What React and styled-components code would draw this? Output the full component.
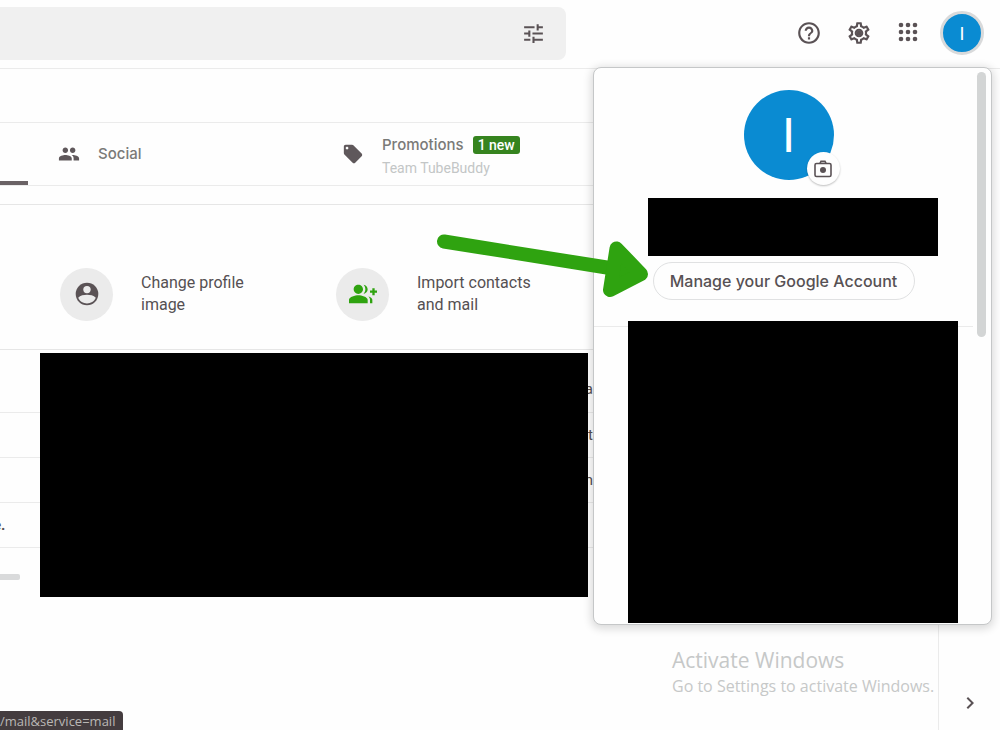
import React from "react";
import styled, { createGlobalStyle } from "styled-components";
import {
  MdTune,
  MdHelpOutline,
  MdOutlineSettings,
  MdPeople,
  MdLocalOffer,
  MdGroupAdd,
  MdChevronRight,
} from "react-icons/md";

const GlobalStyle = createGlobalStyle`
  * { box-sizing: border-box; }
  body {
    margin: 0;
    background: #fefefe;
    color: #555052;
    font-family: Roboto, sans-serif;
  }
  button, input { font: inherit; color: inherit; }
`;

const Page = styled.div`
  position: relative;
  display: flex;
  flex-direction: column;
  min-height: 100vh;
  overflow: hidden;
`;

const Header = styled.header`
  display: flex;
  align-items: center;
  justify-content: space-between;
  height: 69px;
  padding: 0 16px 2px 0;
  border-bottom: 1px solid #ebebeb;
`;

const SearchBar = styled.form`
  display: flex;
  align-items: center;
  width: 57.5%;
  height: 53px;
  padding-right: 20px;
  border-radius: 0 8px 8px 0;
  background: #f0f0f0;
`;

const SearchInput = styled.input`
  flex: 1;
  min-width: 0;
  border: 0;
  outline: 0;
  background: transparent;
  font-size: 16px;
`;

const IconButton = styled.button`
  display: flex;
  padding: 0;
  border: 0;
  background: none;
  color: #5a5255;
  cursor: pointer;
`;

const Actions = styled.nav`
  display: flex;
  align-items: center;
  gap: 19px;
`;

const ActionIcons = styled.div`
  display: flex;
  gap: 24px;
`;

const AvatarButton = styled.button`
  display: flex;
  align-items: center;
  justify-content: center;
  width: 44px;
  height: 44px;
  padding: 0;
  border: 3px solid #d9dadb;
  border-radius: 50%;
  background: #0a8bd2;
  color: #fff;
  font-size: 18px;
`;

const Body = styled.div`
  display: flex;
  flex: 1;
`;

const Main = styled.main`
  flex: 1;
  min-width: 0;
`;

const Rail = styled.aside`
  display: flex;
  flex-direction: column;
  justify-content: flex-end;
  align-items: center;
  width: 62px;
  padding-bottom: 15px;
  border-left: 1px solid #ebebeb;
`;

const Toolbar = styled.div`
  height: 54px;
  border-bottom: 1px solid #ebebeb;
`;

const Tabs = styled.div`
  display: flex;
  height: 63px;
  border-bottom: 1px solid #ebebeb;
`;

const Tab = styled.button`
  display: flex;
  align-items: center;
  gap: 18px;
  width: ${(p) => (p.$active ? "28px" : "284px")};
  padding: 4px 0 0 ${(p) => (p.$active ? "0" : "30px")};
  border: 0;
  border-bottom: 4px solid ${(p) => (p.$active ? "#6a6265" : "transparent")};
  border-radius: 0 4px 0 0;
  background: none;
  color: #5f585b;
  text-align: left;
`;

const TabTitle = styled.span`
  display: flex;
  align-items: center;
  gap: 9px;
  color: #7a7a78;
  font: 500 15px/20px Inter, sans-serif;
`;

const NewBadge = styled.span`
  padding: 0 5px;
  border-radius: 3px;
  background: #36841f;
  color: #fff;
  font: 500 14px/18px Roboto, sans-serif;
`;

const TabText = styled.span`
  padding-top: 4px;
`;

const TabSender = styled.span`
  display: block;
  padding-top: 4px;
  color: #c3c6c6;
  font-size: 14px;
  line-height: 18px;
`;

const Setup = styled.section`
  display: flex;
  align-items: center;
  height: 146px;
  margin-top: 18px;
  padding: 34px 0 0 60px;
  border-top: 1px solid #e6e6e6;
  border-bottom: 1px solid #e6e6e6;
`;

const SetupItem = styled.a`
  display: flex;
  align-items: center;
  gap: 28px;
  width: 276px;
  color: #555052;
  font-size: 16px;
  line-height: 22px;
  text-decoration: none;
`;

const SetupIcon = styled.span`
  display: flex;
  align-items: center;
  justify-content: center;
  width: 53px;
  height: 53px;
  border-radius: 50%;
  background: #ebebeb;
  color: ${(p) => (p.$green ? "#2fa310" : "#5a5255")};
`;

const SetupLabel = styled.span`
  width: 130px;
`;

const Mail = styled.section`
  position: relative;
`;

const MailRow = styled.div`
  display: flex;
  align-items: center;
  justify-content: space-between;
  width: 593px;
  height: ${(p) => (p.$tall ? "63px" : "45px")};
  padding-top: ${(p) => (p.$tall ? "16px" : "0")};
  border-bottom: 1px solid #ebebeb;
  font-size: 15px;
`;

const SubjectEnd = styled.b`
  margin-left: -7px;
`;

const Storage = styled.div`
  width: 20px;
  height: 6px;
  margin-top: 26px;
  border-radius: 0 2px 2px 0;
  background: #d9dadb;
`;

const MailCover = styled.div`
  position: absolute;
  top: 3px;
  left: 40px;
  width: 548px;
  height: 244px;
  background: #000;
`;

const AccountPanel = styled.section`
  position: absolute;
  top: 67px;
  right: 8px;
  display: flex;
  width: 399px;
  border: 1px solid #c5c7c8;
  border-radius: 8px;
  background: #fefefe;
  box-shadow: 0 2px 8px 2px rgba(0, 0, 0, 0.14);
`;

const AccountContent = styled.div`
  display: flex;
  flex: 1;
  flex-direction: column;
  align-items: center;
`;

const Profile = styled.div`
  display: flex;
  flex-direction: column;
  align-items: center;
  width: 100%;
  padding: 22px 0 26px;
  border-bottom: 1px solid #ebebeb;
`;

const Portrait = styled.div`
  position: relative;
  display: flex;
  align-items: center;
  justify-content: center;
  width: 90px;
  height: 90px;
  margin-left: 10px;
  border-radius: 50%;
  background: #0a8bd2;
  color: #fff;
  font-size: 48px;
`;

const CameraButton = styled(IconButton)`
  position: absolute;
  right: -6px;
  bottom: -5px;
  align-items: center;
  justify-content: center;
  width: 33px;
  height: 33px;
  border-radius: 50%;
  background: #fefefe;
  box-shadow: 0 1px 2px rgba(0, 0, 0, 0.25);
`;

const NameCover = styled.div`
  width: 290px;
  height: 58px;
  margin: 18px 0 6px 18px;
  background: #000;
`;

const ManageLink = styled.a`
  width: 262px;
  border: 1px solid #e0e1e2;
  border-radius: 19px;
  color: #575154;
  font: 500 16px/36px Inter, sans-serif;
  text-align: center;
  text-decoration: none;
  white-space: nowrap;
`;

const AccountsCover = styled.div`
  width: 330px;
  height: 302px;
  margin: -6px 0 1px 18px;
  background: #000;
`;

const ScrollTrack = styled.div`
  width: 18px;
  padding: 4px;
`;

const ScrollThumb = styled.div`
  width: 9px;
  height: 265px;
  border-radius: 5px;
  background: #d3d5d5;
`;

const Arrow = styled.svg`
  position: absolute;
  top: 230px;
  right: 346px;
`;

const Watermark = styled.div`
  position: absolute;
  right: 60px;
  bottom: 32px;
  width: 268px;
  color: #c6c8c8;
  font-family: "Open Sans", sans-serif;
  font-size: 16px;
  line-height: 24px;
  white-space: nowrap;
`;

const WatermarkTitle = styled.div`
  font-size: 21px;
  line-height: 28px;
`;

const StatusBar = styled.div`
  position: absolute;
  left: 0;
  bottom: 0;
  padding: 1px 8px 0 0;
  border-radius: 0 4px 0 0;
  background: #443c3f;
  color: #b9b7b5;
  font: 13px/18px "Open Sans", sans-serif;
`;

const AppsIcon = () => (
  <svg width="25" height="24" viewBox="0 0 25 24" fill="currentColor" aria-hidden="true">
    {[5, 12, 19].map((y) =>
      [5, 12, 19].map((x) => <circle key={`${x}-${y}`} cx={x} cy={y} r="2.3" />)
    )}
  </svg>
);

const PersonIcon = () => (
  <svg width="24" height="24" viewBox="0 0 24 24" aria-hidden="true">
    <circle cx="12" cy="12" r="11.3" fill="currentColor" />
    <circle cx="12" cy="7.6" r="3.7" fill="#ebebeb" />
    <path d="M3.2 15.800C5.2 13.400 9 12.800 12 12.800s6.800.6 8.800 3C19.200 19.700 15.800 21.400 12 21.400s-7.200-1.700-8.800-5.600Z" fill="#ebebeb" />
  </svg>
);

const CameraIcon = () => (
  <svg width="20" height="18" viewBox="0 0 20 18" fill="none" stroke="currentColor" strokeWidth="1.6" aria-hidden="true">
    <path d="M7 3.300 8 1.400h4l1 1.900" />
    <rect x="2" y="3.5" width="16" height="13" rx="1.5" />
    <circle cx="10" cy="10" r="3" fill="currentColor" stroke="none" />
  </svg>
);

const SettingsIcon = () => (
  <svg width="26" height="26" viewBox="0 0 26 26" aria-hidden="true">
    <MdOutlineSettings size={26} />
    <circle cx="13" cy="13" r="2.5" fill="currentColor" />
  </svg>
);

export default function App() {
  return (
    <>
      <GlobalStyle />
      <Page>
        <Header>
          <SearchBar role="search">
            <SearchInput type="search" aria-label="Search mail" />
            <IconButton type="button" aria-label="Show search options">
              <MdTune size={25} />
            </IconButton>
          </SearchBar>
          <Actions aria-label="Account and apps">
            <ActionIcons>
              <IconButton aria-label="Support"><MdHelpOutline size={26} /></IconButton>
              <IconButton aria-label="Settings"><SettingsIcon /></IconButton>
              <IconButton aria-label="Google apps"><AppsIcon /></IconButton>
            </ActionIcons>
            <AvatarButton aria-label="Google Account">I</AvatarButton>
          </Actions>
        </Header>

        <Body>
          <Main>
            <Toolbar />
            <Tabs>
              <Tab $active aria-label="Primary" />
              <Tab>
                <MdPeople size={22} />
                <TabTitle>Social</TabTitle>
              </Tab>
              <Tab>
                <MdLocalOffer size={22} />
                <TabText>
                  <TabTitle>Promotions <NewBadge>1 new</NewBadge></TabTitle>
                  <TabSender>Team TubeBuddy</TabSender>
                </TabText>
              </Tab>
            </Tabs>

            <Setup>
              <SetupItem href="#profile">
                <SetupIcon><PersonIcon /></SetupIcon>
                <SetupLabel>Change profile image</SetupLabel>
              </SetupItem>
              <SetupItem href="#import">
                <SetupIcon $green><MdGroupAdd size={28} /></SetupIcon>
                <SetupLabel>Import contacts and mail</SetupLabel>
              </SetupItem>
            </Setup>

            <Mail>
              <MailRow $tall><span /><span>a</span></MailRow>
              <MailRow><span /><span>t</span></MailRow>
              <MailRow><span /><span>n</span></MailRow>
              <MailRow><SubjectEnd>e.</SubjectEnd><span /></MailRow>
              <Storage />
              <MailCover />
            </Mail>
          </Main>
          <Rail>
            <IconButton aria-label="Show side panel"><MdChevronRight size={24} /></IconButton>
          </Rail>
        </Body>

        <Watermark>
          <WatermarkTitle>Activate Windows</WatermarkTitle>
          Go to Settings to activate Windows.
        </Watermark>
        <StatusBar>/mail&amp;service=mail</StatusBar>

        <AccountPanel aria-label="Google Account">
          <AccountContent>
            <Profile>
              <Portrait>
                I
                <CameraButton aria-label="Change profile picture"><CameraIcon /></CameraButton>
              </Portrait>
              <NameCover />
              <ManageLink href="#account">Manage your Google Account</ManageLink>
            </Profile>
            <AccountsCover />
          </AccountContent>
          <ScrollTrack><ScrollThumb /></ScrollTrack>
        </AccountPanel>

        <Arrow width="220" height="74" viewBox="434 230 220 74" fill="#2fa310" stroke="#2fa310" strokeLinecap="round" strokeLinejoin="round" aria-hidden="true">
          <path d="M444 241.5 610 268" strokeWidth="14" />
          <path d="M616.5 248.5 641 274 610 290Z" strokeWidth="14" />
        </Arrow>
      </Page>
    </>
  );
}
